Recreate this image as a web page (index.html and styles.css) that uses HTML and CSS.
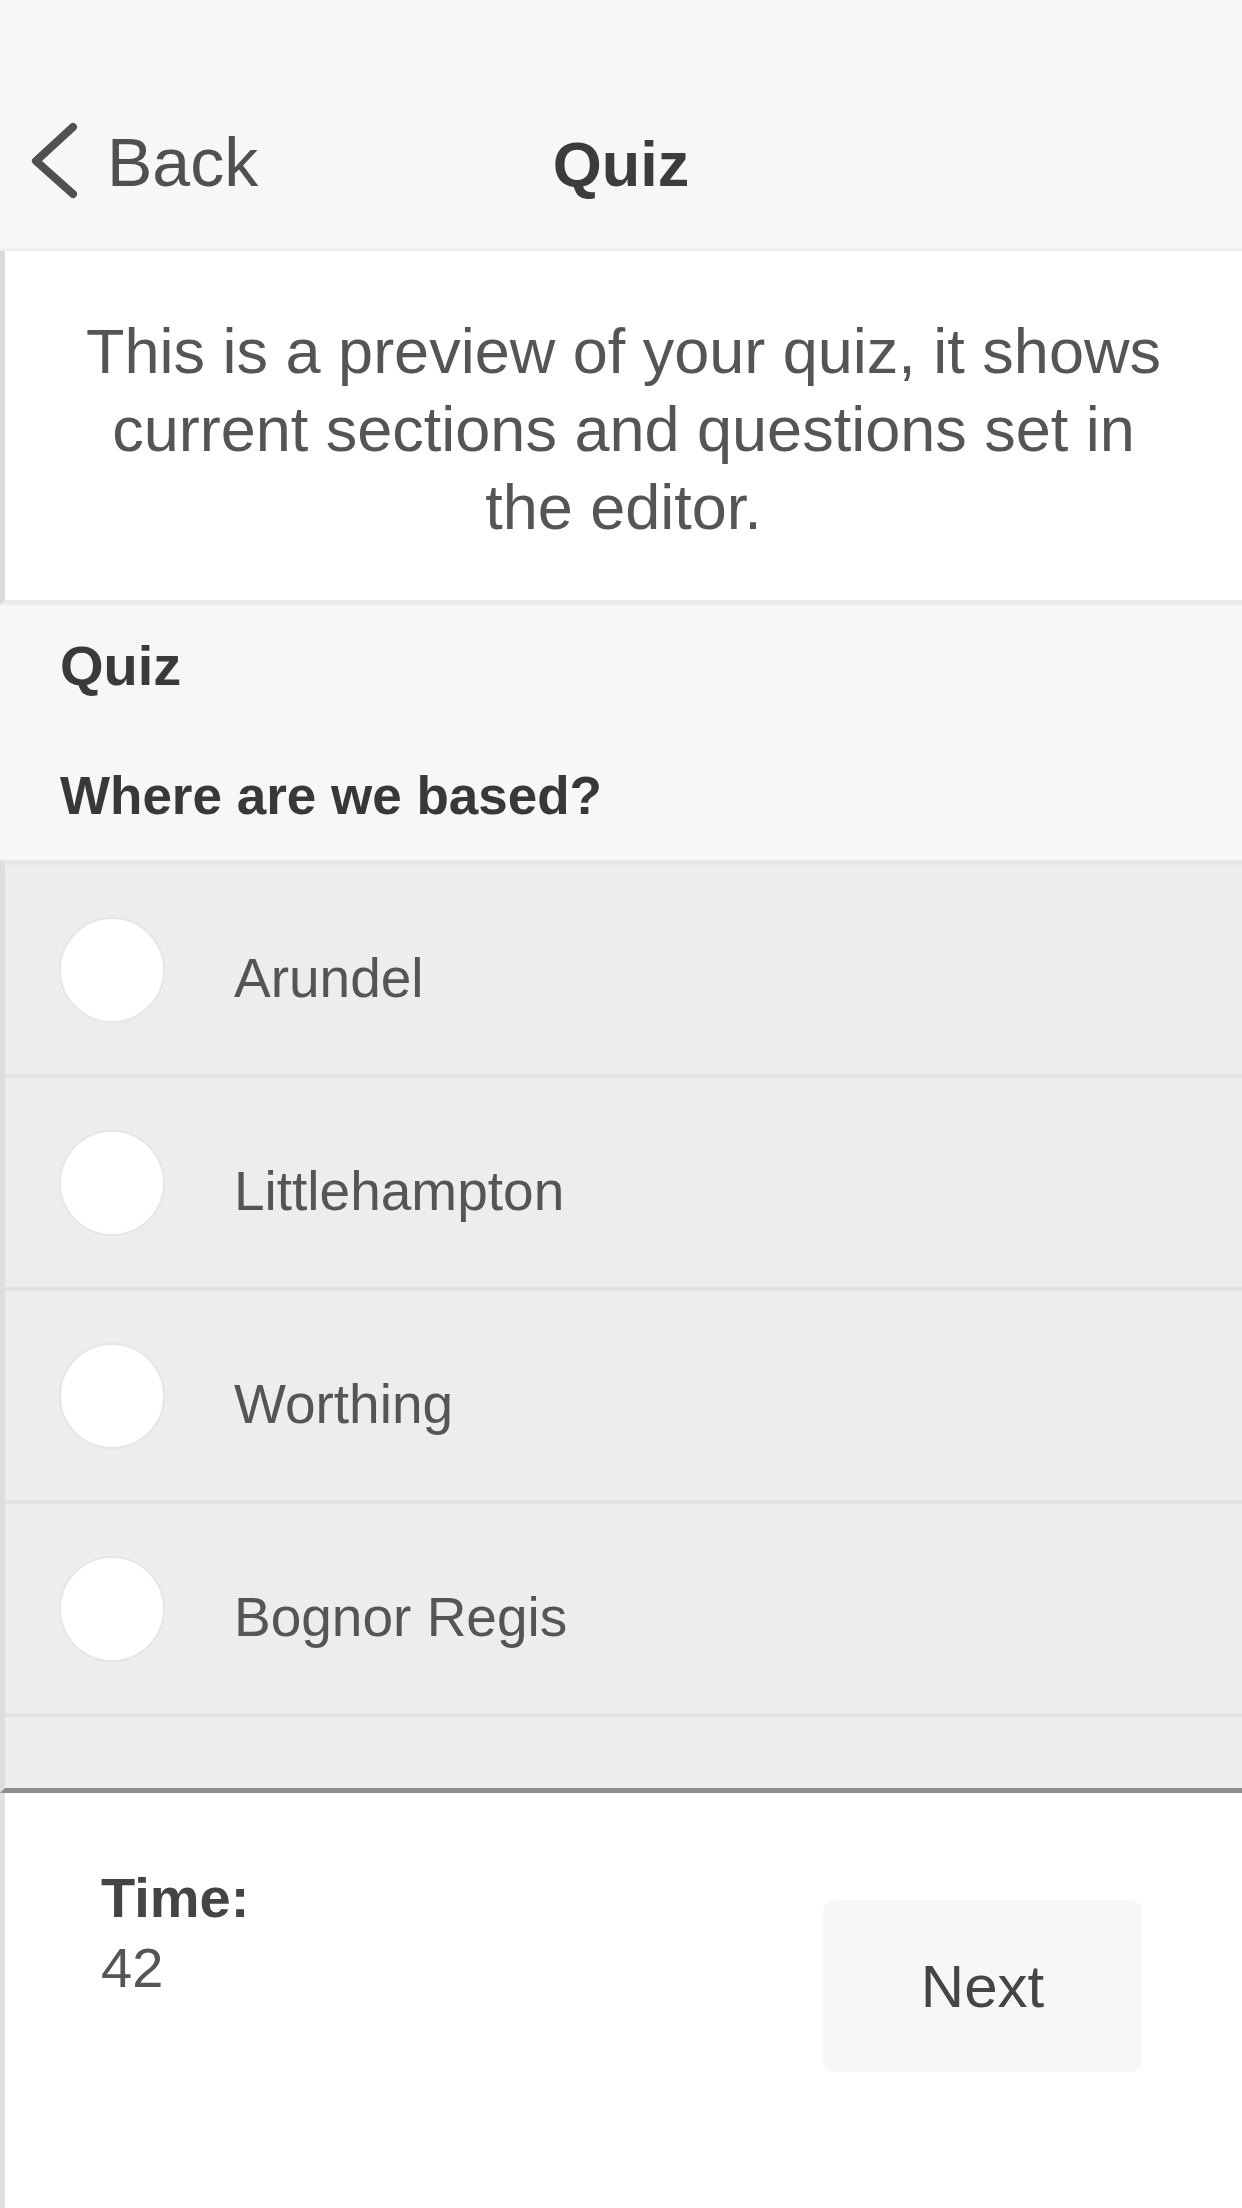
FILE: index.html
```html
<!DOCTYPE html>
<html lang="en">
<head>
<meta charset="utf-8">
<title>Quiz</title>
<link rel="stylesheet" href="styles.css">
</head>
<body>
<div class="page">
  <header class="nav">
    <a class="back"><svg class="chev" width="54" height="80" viewBox="0 0 54 80"><polyline points="45,6 8,40 45,73" fill="none" stroke="#505050" stroke-width="8" stroke-linecap="round" stroke-linejoin="round"/></svg>Back</a>
    <h1 class="title">Quiz</h1>
    <span class="nav-spacer"></span>
  </header>
  <section class="intro">
    <p class="intro-text">This is a preview of your quiz, it shows current sections and questions set in the editor.</p>
  </section>
  <section class="question">
    <h2 class="section-name">Quiz</h2>
    <h3 class="question-text">Where are we based?</h3>
  </section>
  <ul class="options">
    <li class="option"><span class="radio"></span><span class="option-label">Arundel</span></li>
    <li class="option"><span class="radio"></span><span class="option-label">Littlehampton</span></li>
    <li class="option"><span class="radio"></span><span class="option-label">Worthing</span></li>
    <li class="option"><span class="radio"></span><span class="option-label">Bognor Regis</span></li>
  </ul>
  <footer class="footer">
    <div class="timer">
      <div class="timer-label">Time:</div>
      <div class="timer-value">42</div>
    </div>
    <button class="next">Next</button>
  </footer>
</div>
</body>
</html>
```

FILE: styles.css
```css
* { box-sizing: border-box; }

html, body {
  margin: 0;
  padding: 0;
  background: #ffffff;
  font-family: "Liberation Sans", Arial, Helvetica, sans-serif;
}

.page {
  width: 1242px;
  min-height: 2208px;
  display: flex;
  flex-direction: column;
}

.nav {
  height: 251px;
  padding: 121px 0 0 28px;
  background: #f7f7f7;
  border-bottom: 3px solid #f0f0f0;
  display: grid;
  grid-template-columns: 1fr auto 1fr;
  align-items: baseline;
}

.back {
  display: block;
  font-size: 68px;
  line-height: 80px;
  color: #505050;
  text-decoration: none;
}

.chev {
  display: inline-block;
  vertical-align: -15px;
  margin-right: 25px;
}

.title {
  margin: 0;
  font-size: 63px;
  line-height: 80px;
  font-weight: 700;
  color: #3c3c3c;
  transform: translateX(-14px);
}

.intro {
  height: 354px;
  padding: 61px 0 0;
  background: #ffffff;
  border-left: 5px solid #dadada;
  border-bottom: 5px solid #ececec;
}

.intro-text {
  margin: 0 auto;
  width: 1100px;
  text-align: center;
  font-size: 63px;
  line-height: 78px;
  color: #555555;
}

.question {
  height: 255px;
  padding: 28px 0 0 60px;
  background: #f7f7f7;
}

.section-name {
  margin: 0 0 66px;
  font-size: 56px;
  line-height: 66px;
  font-weight: 700;
  color: #3a3a3a;
}

.question-text {
  margin: 0;
  font-size: 53px;
  line-height: 62px;
  font-weight: 700;
  color: #383838;
}

.options {
  list-style: none;
  margin: 0;
  padding: 0 0 71px;
  background: #ededed;
  border-top: 5px solid #e6e6e6;
  border-left: 5px solid #dedede;
  border-bottom: 5px solid #8e8e8e;
}

.option {
  height: 213px;
  padding-left: 54px;
  display: flex;
  align-items: center;
  border-bottom: 4px solid #e2e2e2;
}

.radio {
  flex: none;
  width: 106px;
  height: 106px;
  border-radius: 50%;
  background: #ffffff;
  border: 2px solid #e6e6e6;
}

.option-label {
  margin: 16px 0 0 69px;
  font-size: 55px;
  line-height: 64px;
  color: #555555;
}

.footer {
  flex: 1;
  padding: 70px 100px 0 96px;
  background: #ffffff;
  border-left: 5px solid #e0e0e0;
  display: flex;
  justify-content: space-between;
  align-items: flex-start;
}

.timer {
  font-size: 56px;
  line-height: 70px;
  color: #505050;
}

.timer-label {
  font-weight: 700;
  color: #444444;
}

.timer-value {
  color: #555555;
}

.next {
  margin-top: 37px;
  width: 319px;
  height: 172px;
  border: none;
  border-radius: 12px;
  background: #f7f7f7;
  font-family: "Liberation Sans", Arial, Helvetica, sans-serif;
  font-size: 60px;
  color: #454545;
  padding: 0;
}
```
